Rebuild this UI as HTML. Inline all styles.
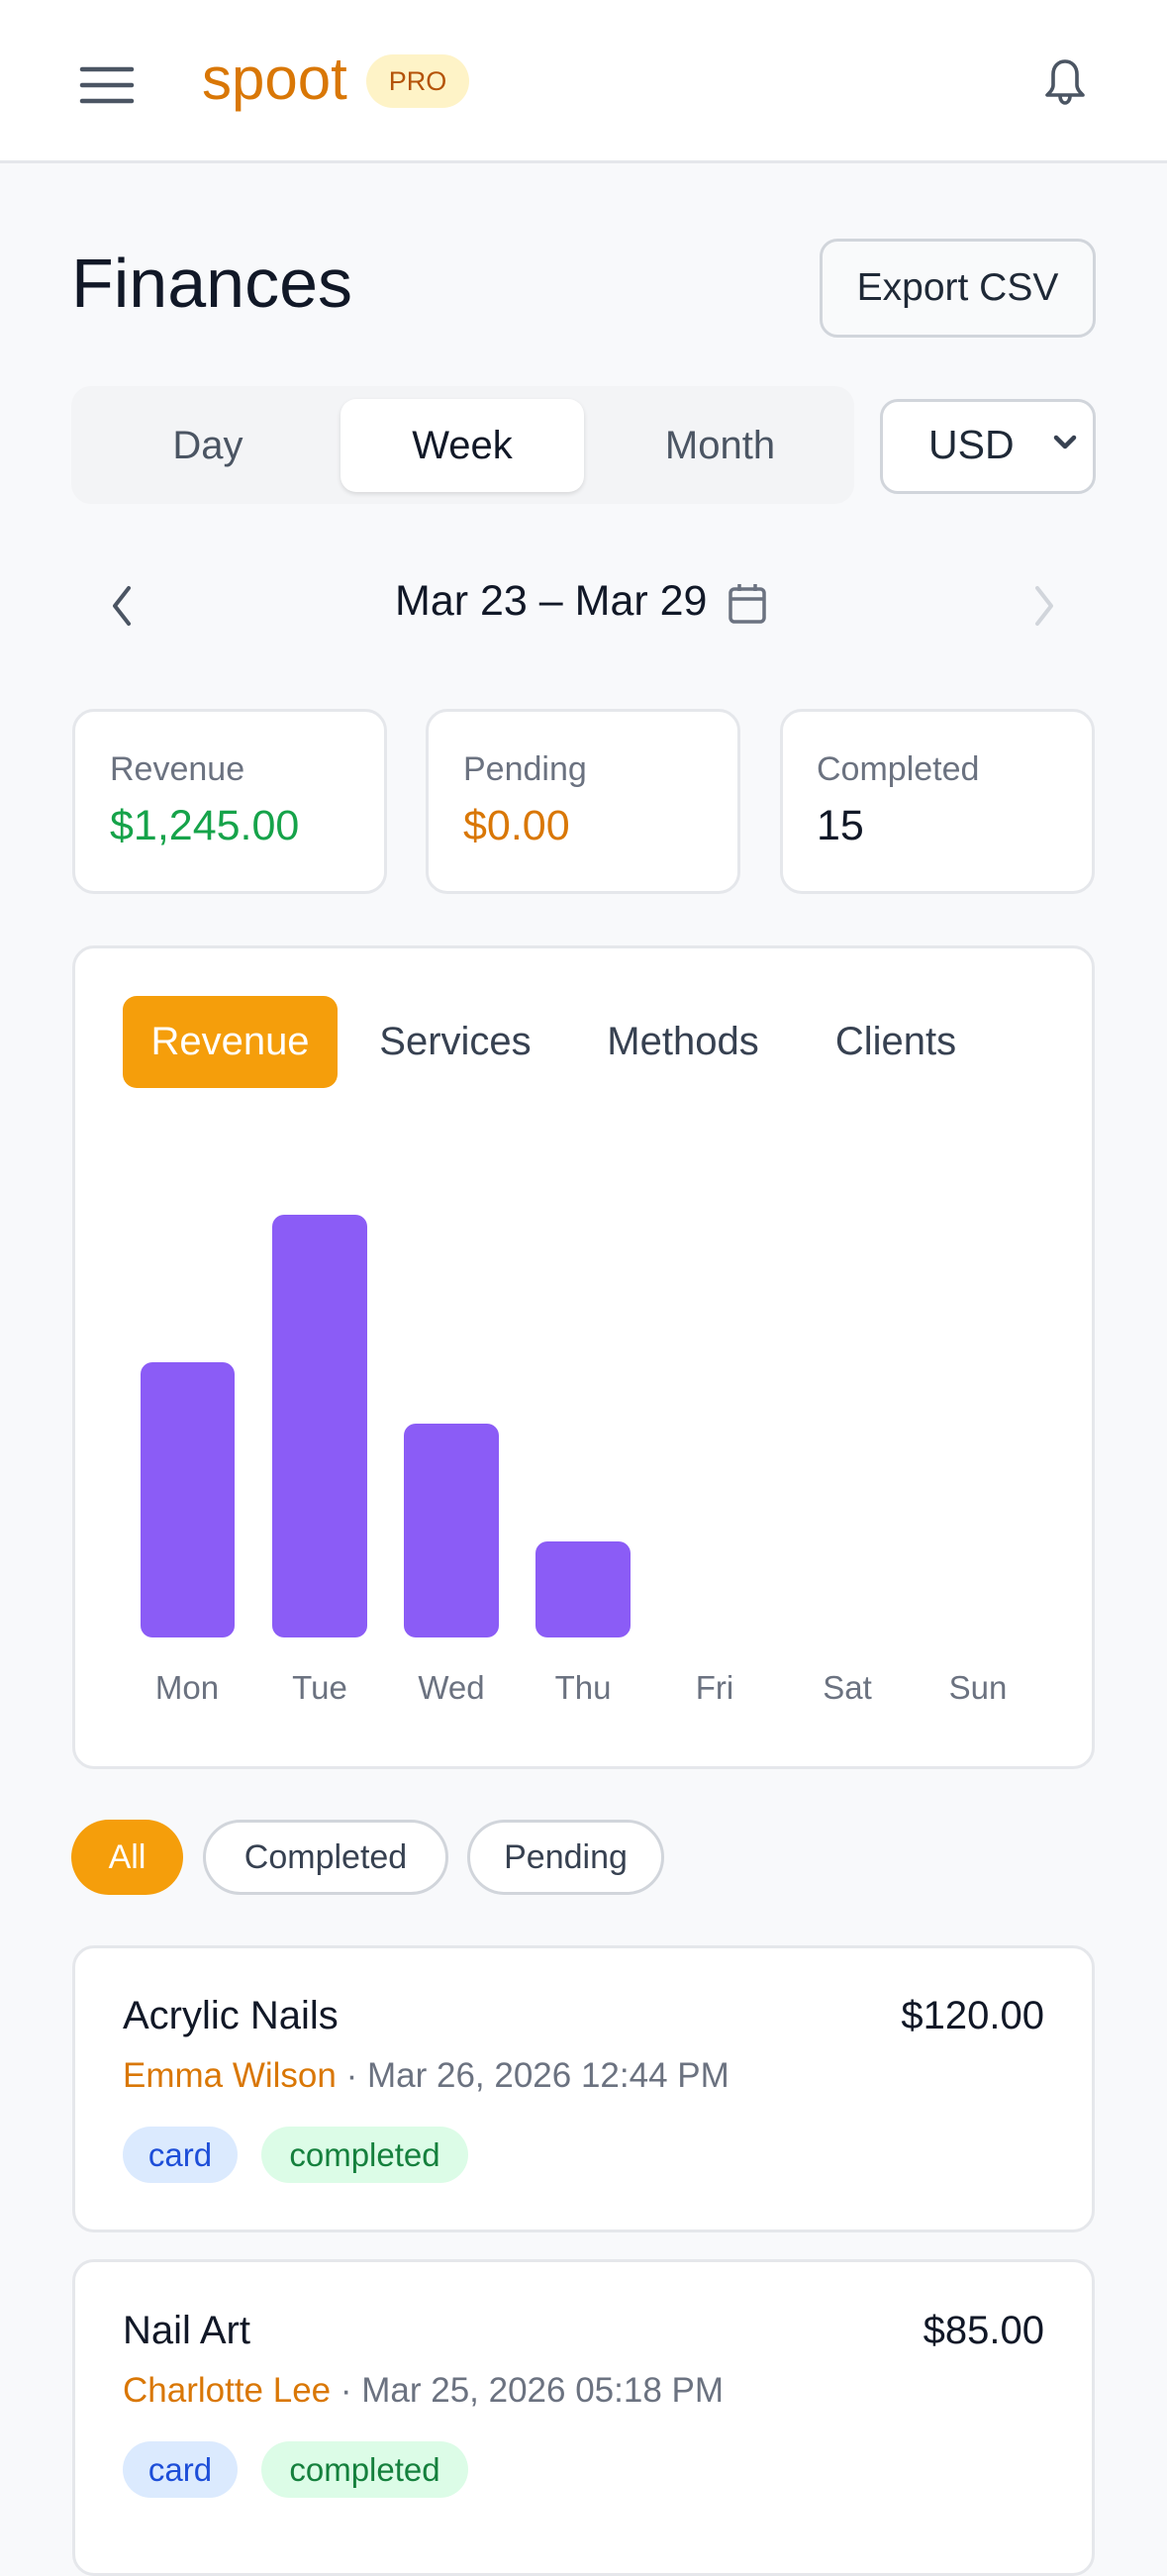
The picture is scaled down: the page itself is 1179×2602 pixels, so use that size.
<!DOCTYPE html>
<html><head><meta charset="utf-8"><style>
*{box-sizing:border-box;margin:0;padding:0}
body{width:1179px;height:2556px;overflow:hidden;background:#f8f9fb;font-family:"Liberation Sans",sans-serif;color:#111827;position:relative}
.a{position:absolute}
.hdr{left:0;top:0;width:1179px;height:165px;background:#fff;border-bottom:3px solid #e5e7eb}
.card{background:#fff;border:3px solid #e5e7eb;border-radius:22px}
.c{display:flex;align-items:center;justify-content:center}
.lbl{font-size:34px;color:#6b7280}
.val{font-size:43px}
.bar{background:#8b5cf6;border-radius:12px}
.day{font-size:33px;color:#6b7280;width:120px;text-align:center;top:1686px}
.tag{border-radius:30px;font-size:33px;height:57px}
</style></head><body>
<div class="a hdr"></div>
<svg class="a" style="left:80px;top:66px" width="56" height="40" viewBox="0 0 56 40"><g stroke="#4b5563" stroke-width="4.5" stroke-linecap="round"><line x1="3" y1="4" x2="53" y2="4"/><line x1="3" y1="20" x2="53" y2="20"/><line x1="3" y1="36" x2="53" y2="36"/></g></svg>
<div class="a" style="left:204px;top:45px;font-size:60px;color:#d97706;line-height:70px">spoot</div>
<div class="a c" style="left:370px;top:55px;width:104px;height:54px;border-radius:27px;background:#fef3c7;color:#b45309;font-size:27px">PRO</div>
<svg class="a" style="left:1052px;top:58px" width="48" height="56" viewBox="0 0 24 28" fill="none" stroke="#4b5563" stroke-width="1.8" stroke-linecap="round" stroke-linejoin="round"><path d="M12 2c-3.5 0-6 2.7-6 6.5v5.5c0 2-1.5 3.5-3 5h18c-1.5-1.5-3-3-3-5V8.5C18 4.7 15.5 2 12 2z"/><path d="M9.5 19.5c0 2 1.1 3.5 2.5 3.5s2.5-1.5 2.5-3.5"/></svg>

<div class="a" style="left:72px;top:246px;font-size:70px;line-height:80px;color:#111827">Finances</div>
<div class="a c" style="left:828px;top:241px;width:279px;height:100px;border:3px solid #d1d5db;border-radius:18px;background:#f9fafb;font-size:39px;color:#1f2937">Export CSV</div>

<div class="a" style="left:72px;top:390px;width:791px;height:119px;background:#f3f4f6;border-radius:20px"></div>
<div class="a c" style="left:110px;top:403px;width:200px;height:94px;font-size:40px;color:#4b5563">Day</div>
<div class="a c" style="left:344px;top:403px;width:246px;height:94px;background:#fff;border-radius:16px;box-shadow:0 2px 5px rgba(0,0,0,.12);font-size:40px;color:#111827">Week</div>
<div class="a c" style="left:620px;top:403px;width:215px;height:94px;font-size:40px;color:#4b5563">Month</div>
<div class="a" style="left:889px;top:403px;width:218px;height:96px;background:#fff;border:3px solid #d1d5db;border-radius:18px"></div>
<div class="a" style="left:938px;top:426px;font-size:41px;color:#1f2937">USD</div>
<svg class="a" style="left:1064px;top:437px" width="24" height="20" viewBox="0 0 24 20"><path d="M3 5l9 9 9-9" fill="none" stroke="#374151" stroke-width="4.5" stroke-linecap="round" stroke-linejoin="round"/></svg>

<svg class="a" style="left:110px;top:590px" width="28" height="44" viewBox="0 0 28 44"><path d="M20 4L6 22l14 18" fill="none" stroke="#4b5563" stroke-width="4" stroke-linecap="round" stroke-linejoin="round"/></svg>
<div class="a" style="left:399px;top:583px;font-size:43px;color:#111827">Mar 23 – Mar 29</div>
<svg class="a" style="left:734px;top:587px" width="42" height="44" viewBox="0 0 42 44" fill="none" stroke="#6b7280" stroke-width="3.5" stroke-linejoin="round"><rect x="4" y="8" width="34" height="33" rx="4"/><line x1="4" y1="18" x2="38" y2="18"/><line x1="13" y1="3" x2="13" y2="10"/><line x1="29" y1="3" x2="29" y2="10"/></svg>
<svg class="a" style="left:1040px;top:590px" width="28" height="44" viewBox="0 0 28 44"><path d="M8 4l14 18L8 40" fill="none" stroke="#d1d5db" stroke-width="4" stroke-linecap="round" stroke-linejoin="round"/></svg>

<div class="a card" style="left:73px;top:716px;width:318px;height:187px"></div>
<div class="a card" style="left:430px;top:716px;width:318px;height:187px"></div>
<div class="a card" style="left:788px;top:716px;width:318px;height:187px"></div>
<div class="a lbl" style="left:111px;top:758px">Revenue</div>
<div class="a val" style="left:111px;top:810px;color:#16a34a">$1,245.00</div>
<div class="a lbl" style="left:468px;top:758px">Pending</div>
<div class="a val" style="left:468px;top:810px;color:#d97706">$0.00</div>
<div class="a lbl" style="left:825px;top:758px">Completed</div>
<div class="a val" style="left:825px;top:810px;color:#111827">15</div>

<div class="a card" style="left:73px;top:955px;width:1033px;height:832px"></div>
<div class="a c" style="left:124px;top:1006px;width:217px;height:93px;background:#f59e0b;border-radius:14px;color:#fff;font-size:40px">Revenue</div>
<div class="a c" style="left:365px;top:1006px;width:190px;height:93px;font-size:40px;color:#374151">Services</div>
<div class="a c" style="left:590px;top:1006px;width:200px;height:93px;font-size:40px;color:#374151">Methods</div>
<div class="a c" style="left:815px;top:1006px;width:180px;height:93px;font-size:40px;color:#374151">Clients</div>
<div class="a bar" style="left:142px;top:1376px;width:95px;height:278px"></div>
<div class="a bar" style="left:275px;top:1227px;width:96px;height:427px"></div>
<div class="a bar" style="left:408px;top:1438px;width:96px;height:216px"></div>
<div class="a bar" style="left:541px;top:1557px;width:96px;height:97px"></div>
<div class="a day" style="left:129px">Mon</div>
<div class="a day" style="left:263px">Tue</div>
<div class="a day" style="left:396px">Wed</div>
<div class="a day" style="left:529px">Thu</div>
<div class="a day" style="left:662px">Fri</div>
<div class="a day" style="left:796px">Sat</div>
<div class="a day" style="left:928px">Sun</div>

<div class="a c" style="left:72px;top:1838px;width:113px;height:76px;border-radius:38px;background:#f59e0b;color:#fff;font-size:34px">All</div>
<div class="a c" style="left:205px;top:1838px;width:248px;height:76px;border-radius:38px;background:#fff;border:3px solid #d1d5db;color:#374151;font-size:34px">Completed</div>
<div class="a c" style="left:472px;top:1838px;width:199px;height:76px;border-radius:38px;background:#fff;border:3px solid #d1d5db;color:#374151;font-size:34px">Pending</div>

<div class="a card" style="left:73px;top:1965px;width:1033px;height:290px"></div>
<div class="a" style="left:124px;top:2014px;font-size:40px">Acrylic Nails</div>
<div class="a" style="right:124px;top:2014px;font-size:40px">$120.00</div>
<div class="a" style="left:124px;top:2077px;font-size:35px;color:#6b7280"><span style="color:#d97706">Emma Wilson</span> · Mar 26, 2026 12:44 PM</div>
<div class="a c tag" style="left:124px;top:2148px;width:116px;background:#dbeafe;color:#1d4ed8">card</div>
<div class="a c tag" style="left:264px;top:2148px;width:209px;background:#dcfce7;color:#15803d">completed</div>

<div class="a card" style="left:73px;top:2282px;width:1033px;height:320px"></div>
<div class="a" style="left:124px;top:2332px;font-size:40px">Nail Art</div>
<div class="a" style="right:124px;top:2332px;font-size:40px">$85.00</div>
<div class="a" style="left:124px;top:2395px;font-size:35px;color:#6b7280"><span style="color:#d97706">Charlotte Lee</span> · Mar 25, 2026 05:18 PM</div>
<div class="a c tag" style="left:124px;top:2466px;width:116px;background:#dbeafe;color:#1d4ed8">card</div>
<div class="a c tag" style="left:264px;top:2466px;width:209px;background:#dcfce7;color:#15803d">completed</div>
</body></html>
